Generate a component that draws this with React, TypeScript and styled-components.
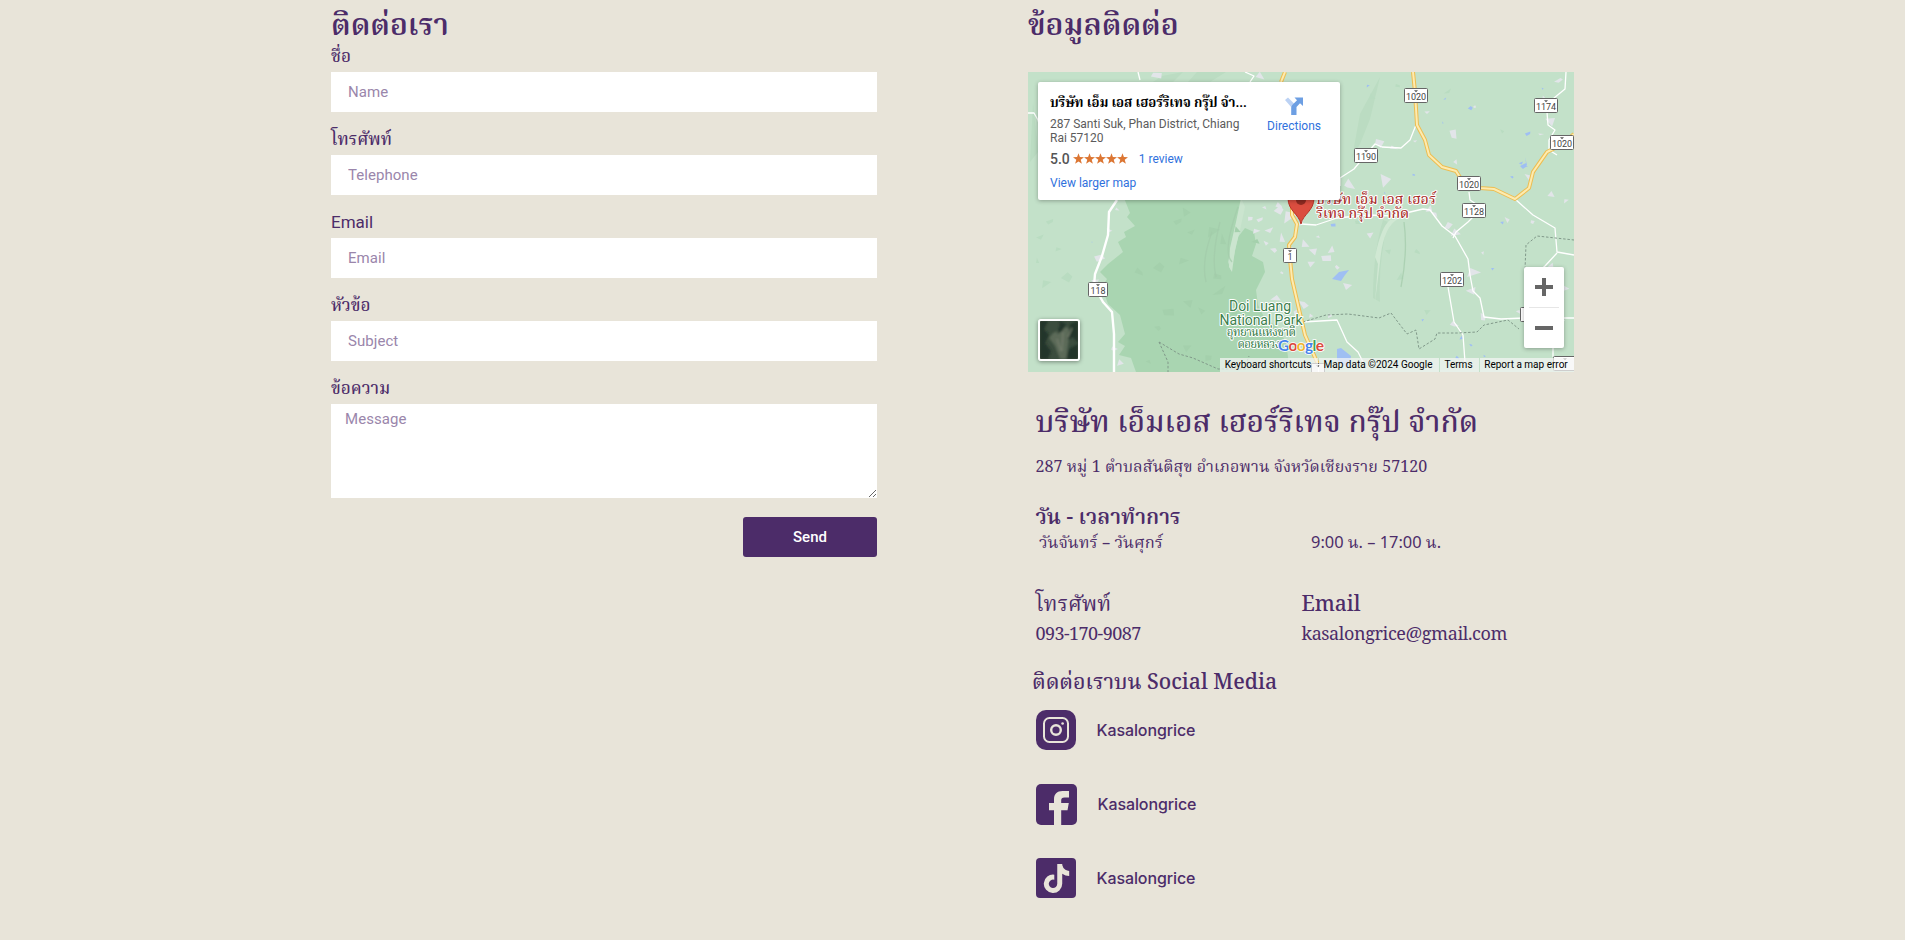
import React from "react";
import styled, { createGlobalStyle } from "styled-components";
import { FaTiktok } from "react-icons/fa";

const purple = "#4c2c69";
const serif = `"Noto Serif", "Noto Serif Thai", "Droid Serif", "DejaVu Serif", serif`;
const sans = `Roboto, "Noto Serif Thai", "Noto Sans Thai", sans-serif`;
const humanist = `"Noto Sans", "Noto Serif Thai", "Noto Sans Thai", sans-serif`;

const Global = createGlobalStyle`
  * { box-sizing: border-box; }
  body { margin: 0; background: #e8e4d9; color: ${purple}; font-family: ${sans}; }
`;

const Page = styled.main`
  display: flex;
  gap: 151px;
  width: 1905px;
  height: 940px;
  padding: 0 331px;
  overflow: hidden;
`;

const Column = styled.section`
  display: flex;
  flex-direction: column;
  width: 546px;
  flex: none;
`;

interface TextProps {
  $size: number;
  $height: number;
  $top?: number;
  $track?: number;
  $weight?: number;
  $indent?: number;
  $font?: string;
}

const Text = styled.div<TextProps>`
  flex: none;
  height: ${(p) => p.$height}px;
  line-height: ${(p) => p.$height}px;
  margin: ${(p) => p.$top ?? 0}px 0 0;
  font-family: ${(p) => p.$font ?? serif};
  font-size: ${(p) => p.$size}px;
  font-weight: ${(p) => p.$weight ?? 400};
  letter-spacing: ${(p) => p.$track ?? 0}px;
  padding-left: ${(p) => p.$indent ?? 0}px;
  white-space: nowrap;
`;

const Form = styled.form`
  display: flex;
  flex-direction: column;
  margin: 0;
`;

const Field = styled.label`
  display: flex;
  flex-direction: column;
  margin-bottom: 19px;
`;

const FieldName = styled.span<{ $thai?: boolean }>`
  height: 24px;
  font: ${(p) => (p.$thai ? 500 : 400)} 17px/17px ${sans};
  white-space: nowrap;
`;

const Input = styled.input`
  height: 40px;
  border: 0;
  padding: 0 17px;
  background: #fff;
  font: 15px ${sans};
  letter-spacing: 0.05px;
  &::placeholder { color: #9a86ab; opacity: 1; }
`;

const Area = styled.textarea`
  height: 94px;
  border: 0;
  padding: 5px 14px;
  background: #fff;
  font: 15px/21px ${sans};
  letter-spacing: 0.05px;
  resize: vertical;
  &::placeholder { color: #9a86ab; opacity: 1; }
`;

const Send = styled.button`
  align-self: flex-end;
  width: 134px;
  height: 40px;
  border: 0;
  border-radius: 3px;
  background: ${purple};
  color: #fff;
  font: 500 15px ${sans};
`;

const MapFrame = styled.div`
  position: relative;
  flex: none;
  width: 546px;
  height: 300px;
  margin-top: 24px;
  overflow: hidden;
  background: #c3e1c9;
  & > svg { display: block; }
`;

const PlaceCard = styled.div`
  position: absolute;
  left: 10px;
  top: 10px;
  display: flex;
  justify-content: space-between;
  width: 302px;
  height: 118px;
  padding: 10px 19px 0 12px;
  border-radius: 2px;
  background: #fff;
  box-shadow: 0 1px 4px rgba(0, 0, 0, 0.3);
`;

const PlaceName = styled.div`
  width: 198px;
  height: 20px;
  color: #000;
  font: 700 13.3px/21px ${sans};
  letter-spacing: -0.1px;
  white-space: nowrap;
`;

const Address = styled.div`
  width: 192px;
  margin-top: 5px;
  color: #5b5b5b;
  font: 12px/14px ${sans};
  white-space: nowrap;
`;

const Rating = styled.div`
  display: flex;
  align-items: center;
  height: 20px;
  margin-top: 4px;
  color: #555;
  font: 500 14px/20px ${sans};
  svg { margin: 0 11px 0 3px; }
`;

const MapLink = styled.span`
  display: block;
  color: #3071dd;
  font: 12px/16px ${sans};
`;

const Larger = styled.div`
  margin-top: 6px;
`;

const Directions = styled.div`
  display: flex;
  flex-direction: column;
  align-items: center;
  gap: 2px;
  padding-top: 4px;
`;

const ZoomBox = styled.div`
  position: absolute;
  left: 496px;
  top: 195px;
  width: 40px;
  height: 81px;
  border-radius: 2px;
  background: #fff;
  box-shadow: 0 1px 4px rgba(0, 0, 0, 0.3);
`;

const Thumb = styled.div`
  position: absolute;
  left: 10px;
  top: 247px;
  width: 42px;
  height: 42px;
  border: 2px solid #fff;
  border-radius: 3px;
  overflow: hidden;
  box-shadow: 0 1px 4px rgba(0, 0, 0, 0.4);
`;

const Credits = styled.div`
  position: absolute;
  right: 0;
  bottom: 0;
  display: flex;
  height: 14px;
  gap: 1px;
`;

const Credit = styled.span<{ $w: number }>`
  width: ${(p) => p.$w}px;
  padding-right: 2px;
  background: rgba(245, 245, 245, 0.72);
  color: #000;
  font: 10px/14px ${sans};
  text-align: center;
  white-space: nowrap;
`;

const Pair = styled.div<{ $left: number }>`
  display: grid;
  flex: none;
  grid-template-columns: ${(p) => p.$left}px auto;
`;

const Social = styled.div`
  display: flex;
  flex: none;
  align-items: flex-start;
  height: 41px;
  margin: 0 0 33px 8px;
  gap: 20.5px;
`;

const Tile = styled.span<{ $radius: number; $size?: number }>`
  display: flex;
  align-items: center;
  justify-content: center;
  width: ${(p) => p.$size ?? 40}px;
  height: ${(p) => p.$size ?? 40}px;
  border-radius: ${(p) => p.$radius}px;
  background: ${purple};
  color: #e8e4d9;
  overflow: hidden;
`;

type Pt = [number, number, number];

// Built-up patches: x, y, radius.
const patches: Pt[] = [
  [232,148,7],[241,158,8],[228,160,6],[250,138,6],[262,145,9],[255,168,9],[266,178,7],[278,172,9],[285,180,7],[298,186,6],
  [272,152,6],[239,172,5],[246,178,6],[284,192,7],[303,178,6],[252,134,5],[274,134,4],[236,136,6],[222,146,5],[290,165,3],
  [343,163,5],[276,232,6],[268,240,7],[282,244,6],[309,195,4],[319,213,7],[248,227,6],[349,70,8],[364,76,6],[387,69,4],
  [425,62,8],[428,90,4],[355,108,9],[320,113,8],[479,148,8],[428,162,10],[420,154,6],[445,202,9],[443,218,6],[456,246,7],
  [524,122,9],[500,105,7],[527,70,7],[522,50,7],[518,28,6],[532,8,6],[538,129,6],[522,194,8],[505,150,3],[401,137,5],
  [407,142,5],[440,135,6],[490,240,5],[81,158,5],[72,186,6],[68,210,5],[88,137,4],[86,277,6],[91,291,7],[455,181,3],
  [129,3,6],[230,5,7],[512,62,4],[447,35,3],[399,40,4],[301,244,4],[426,253,5],[536,217,5],[368,147,3],[254,201,3],
];

const lakes: Pt[] = [
  [500,62,6],[493,91,4],[497,95,4],[442,36,3],[340,14,2],[415,51,2],
  [386,103,3],[357,121,2],[474,151,3],[305,153,3],[417,27,2],[515,17,2],[484,105,3],[465,197,3],[433,266,3],[430,286,3],
  [457,284,2],[224,188,1],[64,170,1],[304,132,2],[395,248,2],[443,273,2],
];

const shadows: Pt[] = [
  [150,150,9],[163,160,7],[155,190,8],[130,195,7],[185,160,8],[196,170,10],[190,205,9],[210,158,7],[160,232,8],[140,240,7],
  [192,220,9],[175,240,7],[130,256,6],[160,276,8],[206,240,6],[112,200,6],[160,140,7],[120,290,7],[180,285,7],[228,170,6],
];

const softShades: Pt[] = [
  [22,150,8],[12,165,7],[30,178,5],[38,205,7],[18,212,6],[10,190,5],[370,14,5],[345,25,7],[360,180,5],[330,150,4],
  [420,20,5],[475,60,4],[505,205,6],[400,240,6],[372,205,6],[390,180,4],
];

function shard([x, y, r]: Pt, i: number) {
  const count = i % 3 === 0 ? 4 : 3;
  return Array.from({ length: count }, (_, k) => {
    const a = (k / count) * Math.PI * 2 + i * 0.9 + ((i * 7 + k * 3) % 5) * 0.18;
    const d = r * (0.35 + (((i * 37 + k * 53) % 17) / 17) * 0.75);
    return `${(x + Math.cos(a) * d).toFixed(1)},${(y + Math.sin(a) * d * 0.85).toFixed(1)}`;
  }).join(" ");
}

const Shards = ({ items, fill }: { items: Pt[]; fill: string }) => (
  <g fill={fill}>
    {items.map((p, i) => <polygon key={i} points={shard(p, i)} />)}
  </g>
);

const whiteRoads = [
  "89,128 81,140 80,163 74,184 67,202 66,214 75,230 84,240 86,262 86,300",
  "0,41 6,41 10,48 14,62", "217,0 226,4 222,10", "110,0 112,8",
  "312,114 312,106 326,97 340,80 347,72 354,75 373,76 382,68 388,53",
  "273,152 288,153 309,146 340,143 365,144 395,137 402,138 414,154 427,164 440,187 442,203 445,219 452,226 456,245 473,247 496,246 546,246",
  "447,143 440,150 428,160 425,166", "441,120 442,128 448,132",
  "487,127 505,143 527,156 529,180 546,183", "529,181 517,194 510,200",
  "519,40 520,53 527,58 521,68 521,78 529,83", "538,0 537,17 526,26 520,36",
  "420,215 426,250 435,263 437,290", "275,250 309,248 319,270 330,280 335,290",
  "536,248 525,270 525,285",
];

const dashed = [
  "275,250 298,243 320,242 351,246 363,241 379,262 388,258 391,277 407,267 409,261 430,261 449,260 456,253 480,248 491,257",
  "497,197 498,173 509,164 546,168", "131,270 140,290 140,300", "131,270 151,282 165,286 190,297 220,297", "216,297 221,284",
];

const yellow = [
  "385,0 387,20 389,53 397,68 401,83 414,95 428,99 435,110 452,116 466,117 487,127 501,116 505,100 519,80 533,73 546,62",
  "264,126 264,143 269,152 267,165 261,173 262,187 264,207 270,233 277,263 289,290 294,300", "257,0 253,10",
];

const shields: [string, number, number, number][] = [
  ["1020", 388, 23.5, 23], ["1174", 518, 33.5, 23], ["1020", 534, 70.5, 23], ["1190", 338, 83.5, 23],
  ["1020", 441, 111.5, 23], ["1128", 446, 138.5, 23], ["1202", 424, 207.5, 23], ["1", 262, 183.5, 13], ["118", 70, 217.5, 19],
  ["", 504, 242.5, 23], ["", 537, 291.5, 23], ["", 290, 298.5, 13],
];

const MapArt = () => (
  <svg width="546" height="300" viewBox="0 0 546 300">
    <rect width="546" height="300" fill="#c3e1c9" />
    <path d="M182 10 L198 0 H169 L160 10Z M155 0 L145 10 H125 L134 4Z M5 30 L2 90 10 80Z M360 150 Q350 190 352 230 L345 226 Q345 180 355 148Z M352 5 L332 42 324 86 332 72 342 47Z" fill="#bbdcc2" />
    <path d="M370 147 Q355 155 352 190 L347 230 350 192 347 185 Q353 155 362 148Z" fill="#d0e8d3" />
    <path d="M96 126 L102 141 99 145 107 154 96 160 98 165 90 170 95 180 80 192 72 200 79 207 74 215 80 232 92 243 97 262 90 270 97 274 91 283 103 286 108 300 H262 L258 270 249 255 236 245 230 233 228 218 237 200 235 190 224 184 228 172 226 160 217 156 210 165 203 198 200 190 210 150 214 145 214 126Z" fill="#a9d5b1" />
    <path d="M213 126 L208 150 202 176 201 195 204 200 207 178 212 158 217 135Z" fill="#cbe5cf" />
    <Shards items={shadows} fill="#a4d0ac" />
    <Shards items={softShades} fill="#b9dcc1" />
    <path d="M184 160 Q173 190 178 210 M192 150 Q183 185 188 205 M210 135 Q194 180 204 190 M376 150 Q380 180 373 215" fill="none" stroke="#a2caaa" strokeWidth="1.3" opacity=".7" />
    <Shards items={patches} fill="#e2e5e9" />
    <Shards items={lakes} fill="#9fbff3" />
    <path d="M304 207 L311 200 321 198 317 203 313 209Z M309 277 L313 276 323 284 321 297 309 289Z M492 94 L498 91 497 85 499 93 495 97Z" fill="#9fbff3" />
    <g fill="none" stroke="#fff" strokeLinejoin="round" strokeWidth="1.3">
      {whiteRoads.map((p, i) => <polyline key={i} points={p} strokeWidth={i === 0 ? 2.4 : 1.3} />)}
    </g>
    <g fill="none" stroke="#81998a" strokeWidth="1" strokeDasharray="2.5 1.8">
      {dashed.map((p, i) => <polyline key={i} points={p} />)}
    </g>
    {yellow.map((p, i) => (
      <g key={i} fill="none" strokeLinejoin="round">
        <polyline points={p} stroke="#edbd51" strokeWidth="4" />
        <polyline points={p} stroke="#fdebb0" strokeWidth="2" />
      </g>
    ))}
    {shields.map(([label, x, y, w], i) => (
      <g key={i}>
        <rect x={x - w / 2} y={y - 7} width={w} height="14" rx="1" fill="#fff" stroke="#666" />
        <path d={`M${x - 2} ${y - 5.3}h4l-2 2z`} fill="#555" />
        {label && <text x={x} y={y + 4.8} textAnchor="middle" fontFamily="Roboto" fontSize="9" fill="#444">{label}</text>}
      </g>
    ))}
    <path d="M273 152 C271 142 260 139 260 126 A13 13 0 0 1 286 126 C286 139 275 142 273 152Z" fill="#db4d3f" stroke="#b93429" />
    <circle cx="273" cy="128" r="5" fill="#902b22" />
    <g fontFamily={sans} fontSize="14" fontWeight="500" fill="#a82c28" stroke="#fff" strokeWidth="2" strokeLinejoin="round" paintOrder="stroke">
      <text x="288" y="132" textLength="120">บริษัท เอ็ม เอส เฮอร์</text>
      <text x="288" y="146" textLength="93">ริเทจ กรุ๊ป จำกัด</text>
    </g>
    <g fontFamily={sans} fontSize="14" fill="#3d7f4e" stroke="#fff" strokeWidth="2" strokeLinejoin="round" paintOrder="stroke" textAnchor="middle">
      <text x="232" y="239" textLength="62">Doi Luang</text>
      <text x="233" y="253" textLength="83">National Park</text>
      <text x="233" y="264" fontSize="11.5" fontWeight="500" textLength="69">อุทยานแห่งชาติ</text>
      <text x="231" y="276" fontSize="11.5" fontWeight="500" textLength="43">ดอยหลวง</text>
    </g>
    <text x="250" y="279" fontFamily="Lato" fontWeight="700" fontSize="15.5" textLength="46" stroke="#fff" strokeWidth="1.6" paintOrder="stroke">
      <tspan fill="#4683ea">G</tspan><tspan fill="#dc4a3d">o</tspan><tspan fill="#efb52f">o</tspan><tspan fill="#4683ea">g</tspan><tspan fill="#42a25a">l</tspan><tspan fill="#dc4a3d">e</tspan>
    </text>
  </svg>
);

const Stars = () => (
  <svg width="55" height="12" viewBox="0 0 55 12" fill="#dc7633">
    {[0, 1, 2, 3, 4].map((i) => (
      <path key={i} transform={`translate(${i * 11} 0)`} d="M5.5 .2 L6.9 4.1 11 4.2 7.7 6.7 8.9 10.8 5.5 8.4 2.1 10.8 3.3 6.7 0 4.2 4.1 4.1Z" />
    ))}
  </svg>
);

const TurnIcon = () => (
  <svg width="20" height="20" viewBox="0 0 20 20">
    <path d="M1 4 L4 1.5 10.5 8 8 12Z" fill="#bcd2f4" />
    <path d="M7.2 19 V12 Q7.2 10 8.5 8.7 L13 4.3 10.5 1.5 H19 V10 L16 7.2 12.5 11 V19Z" fill="#6d9fe3" />
  </svg>
);

const Satellite = () => (
  <svg width="38" height="38" viewBox="0 0 38 38">
    <defs><filter id="soft"><feGaussianBlur stdDeviation="0.9" /></filter></defs>
    <rect width="38" height="38" fill="#3b4d3e" />
    <g filter="url(#soft)">
      <path d="M0 0H8L4 8 9 14 5 22 11 30 8 38H0Z" fill="#22352a" />
      <path d="M13 12L27 6 30 10 26 38H20L15 25 9 17Z" fill="#5c6a58" />
      <path d="M19 0L26 3 22 10 17 13 20 4Z M30 3L38 0V22L33 16 28 19Z M29 28L38 23V38H27Z" fill="#21352a" />
      <path d="M23 11L22 30 M17 18L21 30 M32 7L28 16" stroke="#77806f" strokeWidth="1.2" />
    </g>
  </svg>
);

const Instagram = () => (
  <svg width="40" height="40" viewBox="0 0 40 40" fill="none" stroke="#e8e4d9">
    <rect x="8" y="8" width="24" height="24" rx="5.5" strokeWidth="2" />
    <circle cx="20" cy="20" r="4.8" strokeWidth="2.4" />
    <circle cx="26.6" cy="13.5" r="1.3" fill="#e8e4d9" stroke="none" />
  </svg>
);

const Facebook = () => (
  <svg width="41" height="41" viewBox="0 0 41 41" fill="#e8e4d9">
    <path d="M18 41V26.3H13V19H18V15.5C18 10 21 7 26.5 7H33V13.5H28.5C26 13.5 25.2 14.6 25.2 16.5V19H32.8L31.5 26.3H25.2V41Z" />
  </svg>
);

const fields: [string, string][] = [
  ["ชื่อ", "Name"], ["โทรศัพท์", "Telephone"], ["Email", "Email"], ["หัวข้อ", "Subject"],
];

const Handle = () => (
  <Text $font="Inter, sans-serif" $size={16} $weight={500} $height={40} $track={-0.1}>Kasalongrice</Text>
);

export default function App() {
  return (
    <>
      <Global />
      <Page>
        <Column>
          <Text as="h2" $size={30} $height={48} $weight={600}>ติดต่อเรา</Text>
          <Form>
            {fields.map(([label, hint]) => (
              <Field key={label}>
                <FieldName $thai={label !== "Email"}>{label}</FieldName>
                <Input placeholder={hint} />
              </Field>
            ))}
            <Field>
              <FieldName $thai>ข้อความ</FieldName>
              <Area placeholder="Message" />
            </Field>
            <Send type="button">Send</Send>
          </Form>
        </Column>
        <Column>
          <Text as="h2" $size={30} $height={48} $weight={600}>ข้อมูลติดต่อ</Text>
          <MapFrame>
            <MapArt />
            <PlaceCard>
              <div>
                <PlaceName>บริษัท เอ็ม เอส เฮอร์ริเทจ กรุ๊ป จำ...</PlaceName>
                <Address>287 Santi Suk, Phan District, Chiang<br />Rai 57120</Address>
                <Rating>5.0<Stars /><MapLink>1 review</MapLink></Rating>
                <Larger><MapLink>View larger map</MapLink></Larger>
              </div>
              <Directions><TurnIcon /><MapLink>Directions</MapLink></Directions>
            </PlaceCard>
            <Thumb><Satellite /></Thumb>
            <ZoomBox>
              <svg width="40" height="81" viewBox="0 0 40 81">
                <path d="M18 11h4v7h7v4h-7v7h-4v-7h-7v-4h7z M11 59h18v4h-18z" fill="#666" />
                <path d="M5 40.5h30" stroke="#e6e6e6" />
              </svg>
            </ZoomBox>
            <Credits>
              <Credit $w={98}>Keyboard shortcuts</Credit>
              <Credit $w={120}>Map data ©2024 Google</Credit>
              <Credit $w={39}>Terms</Credit>
              <Credit $w={94}>Report a map error</Credit>
            </Credits>
          </MapFrame>
          <Text as="h2" $size={29.75} $top={15} $height={68} $weight={500} $indent={7.5}>บริษัท เอ็มเอส เฮอร์ริเทจ กรุ๊ป จำกัด</Text>
          <Text $size={16} $height={22} $indent={7.5} $track={0.07}>287 หมู่ 1 ตำบลสันติสุข อำเภอพาน จังหวัดเชียงราย 57120</Text>
          <Text as="h3" $size={21.2} $top={26} $height={26} $weight={600} $indent={7.5}>วัน - เวลาทำการ</Text>
          <Pair $left={272}>
            <Text $font={humanist} $size={16.5} $height={26} $indent={11}>วันจันทร์ – วันศุกร์</Text>
            <Text $font={humanist} $size={16.4} $height={26} $indent={11}>9:00 น. – 17:00 น.</Text>
          </Pair>
          <Pair $left={266}>
            <Text $size={21.3} $top={33} $height={30} $indent={7.5}>โทรศัพท์</Text>
            <Text $size={21} $top={34} $height={29} $indent={7.5} $weight={500}>Email</Text>
            <Text $size={18} $height={31} $indent={7.5} $track={-0.55}>093-170-9087</Text>
            <Text $size={18} $height={31} $indent={7.5} $track={-0.4}>kasalongrice@gmail.com</Text>
          </Pair>
          <Text $size={21.2} $top={3} $height={58} $indent={4} $weight={500}>ติดต่อเราบน Social Media</Text>
          <Social><Tile $radius={10}><Instagram /></Tile><Handle /></Social>
          <Social><Tile $radius={5} $size={41}><Facebook /></Tile><Handle /></Social>
          <Social><Tile $radius={4}><FaTiktok size={29} /></Tile><Handle /></Social>
        </Column>
      </Page>
    </>
  );
}
